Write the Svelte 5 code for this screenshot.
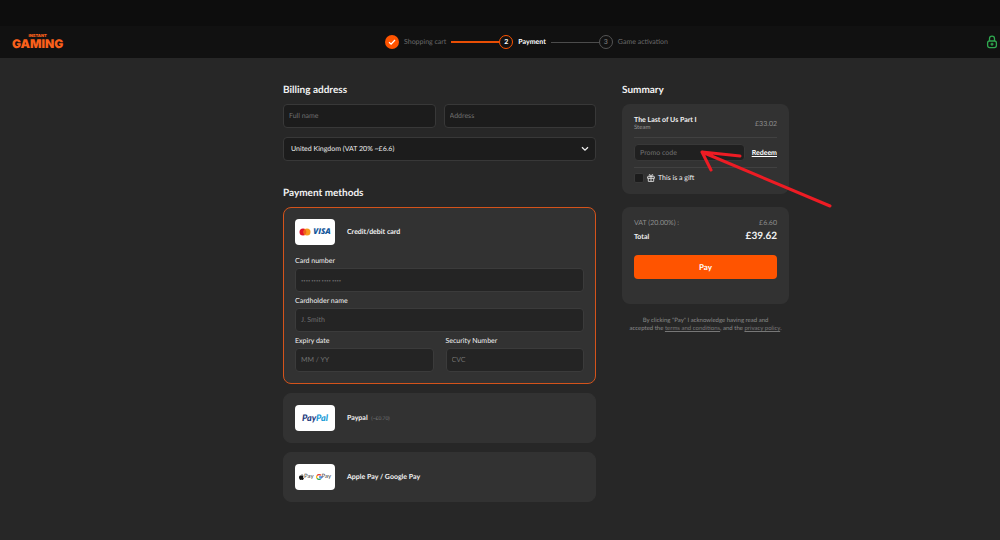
<script>
  let country = $state('gb');
  let gift = $state(false);
</script>

<div class="page">
  <header>
    <a class="logo" href="#home" aria-label="Instant Gaming">
      <small>INSTANT</small>
      <b>GAMING</b>
    </a>
    <ol class="steps">
      <li>
        <span class="dot done">
          <svg viewBox="0 0 14 14" width="14" height="14" aria-hidden="true"><path d="M4 7.3 6.1 9.2 10 5" fill="none" stroke="#fff" stroke-width="1.3" /></svg>
        </span>
        <span>Shopping cart</span>
      </li>
      <li class="line active" aria-hidden="true"></li>
      <li class="current"><span class="dot">2</span><span>Payment</span></li>
      <li class="line" aria-hidden="true"></li>
      <li><span class="dot">3</span><span>Game activation</span></li>
    </ol>
    <svg class="lock" viewBox="0 0 12 14" width="12" height="14" fill="none" stroke="#2fa84f" stroke-width="1.3" aria-hidden="true">
      <path d="M3.5 6V3.6a2.5 2.5 0 0 1 5 0V6" />
      <rect x="1.6" y="6" width="8.8" height="6.6" rx="2" />
      <path d="M6 7.7v3M4.5 9.2h3" />
    </svg>
  </header>

  <main>
    <div class="left">
      <section>
        <h2>Billing address</h2>
        <div class="two">
          <input type="text" placeholder="Full name" aria-label="Full name" />
          <input type="text" placeholder="Address" aria-label="Address" />
        </div>
        <div class="select">
          <select bind:value={country} aria-label="Country">
            <option value="gb">United Kingdom (VAT 20% ~£6.6)</option>
          </select>
          <svg viewBox="0 0 8 6" width="8" height="6" aria-hidden="true"><path d="M1 1.2 4 4.2 7 1.2" fill="none" stroke="#eee" stroke-width="1.3" /></svg>
        </div>
      </section>

      <section class="methods">
        <h2>Payment methods</h2>
        <div class="method selected">
          <div class="head">
            <span class="brand">
              <svg viewBox="0 0 12 8" width="12" height="8" aria-hidden="true"><circle cx="4" cy="4" r="3.5" fill="#e2152a" /><circle cx="8" cy="4" r="3.5" fill="#f79a1d" /><path d="M6 1.2a3.5 3.5 0 0 1 0 5.6 3.5 3.5 0 0 1 0-5.6" fill="#f0601c" /></svg>
              <b class="visa">VISA</b>
            </span>
            <strong>Credit/debit card</strong>
          </div>
          <label>Card number <input class="digits" type="text" placeholder="•••• •••• •••• ••••" /></label>
          <label>Cardholder name <input type="text" placeholder="J. Smith" /></label>
          <div class="pair">
            <label>Expiry date <input type="text" placeholder="MM / YY" /></label>
            <label>Security Number <input type="text" placeholder="CVC" /></label>
          </div>
        </div>
        <div class="method head">
          <span class="brand"><b class="paypal">Pay<i>Pal</i></b></span>
          <strong>Paypal <small>(~£0.70)</small></strong>
        </div>
        <div class="method head">
          <span class="brand wallets">
            <svg viewBox="0 0 10 12" width="5" height="6" aria-hidden="true"><path d="M7 0C7 1.6 6 2.7 4.8 2.8 4.7 1.5 5.8.3 7 0M9.3 4C7.6 5 7.8 7.5 9.8 8.3 9 10.5 8 12 6.9 12c-.7 0-1-.4-1.8-.4S3.900 12 3.300 12C1.500 12 0 9 0 6.600 0 3.200 3 2.400 5 3.600 6.500 2.800 8.300 2.900 9.300 4" fill="#111" /></svg>
            <span>Pay</span>
            <svg class="g" viewBox="0 0 12 12" width="6" height="6" fill="none" stroke-width="2.600" aria-hidden="true"><path d="M2 3.500A4.700 4.700 0 0 1 9.700 2.800" stroke="#ea4335" /><path d="M2 3.500a4.700 4.700 0 0 0 0 5" stroke="#fbbc05" /><path d="M2 8.500a4.700 4.700 0 0 0 7.300 1" stroke="#34a853" /><path d="M9.300 9.500A4.700 4.700 0 0 0 10.700 6H6" stroke="#4285f4" /></svg>
            <span>Pay</span>
          </span>
          <strong>Apple Pay / Google Pay</strong>
        </div>
      </section>
    </div>

    <aside>
      <h2>Summary</h2>
      <div class="card order">
        <div class="row item">
          <div><b>The Last of Us Part I</b><span>Steam</span></div>
          <span class="price">£33.02</span>
        </div>
        <div class="row promo">
          <input type="text" placeholder="Promo code" aria-label="Promo code" />
          <button class="redeem" type="button">Redeem</button>
        </div>
        <label class="gift">
          <input type="checkbox" bind:checked={gift} />
          <svg viewBox="0 0 8 8" width="8" height="8" fill="none" stroke="#ddd" stroke-width="0.9" aria-hidden="true"><path d="M.6 2.700h6.800v1.700H.6zM1.300 4.400v3h5.400v-3M4 2.700v4.700M4 2.500C1.500 2.500 1.700.4 2.700.5 3.500.6 4 2.500 4 2.500S4.500.6 5.300.5C6.300.4 6.500 2.500 4 2.500" /></svg>
          <span>This is a gift</span>
        </label>
      </div>
      <div class="card totals">
        <div class="row vat"><span>VAT (20.00%) :</span><span>£6.60</span></div>
        <div class="row total"><b>Total</b><strong>£39.62</strong></div>
        <button class="pay" type="button">Pay</button>
      </div>
      <p>By clicking "Pay" I acknowledge having read and<br />accepted the <a href="#terms">terms and conditions</a>, and the <a href="#privacy">privacy policy</a>.</p>
      <svg class="arrow" viewBox="0 0 140 64" width="140" height="64" aria-hidden="true"><path d="M134 59 6 5l38 4M6 5l9 18" fill="none" stroke="#ed1c24" stroke-width="3" stroke-linecap="round" stroke-linejoin="round" /></svg>
    </aside>
  </main>
</div>

<style>
  :global(body) {
    margin: 0;
    background: #272727;
  }
  .page {
    min-height: 100vh;
    box-sizing: border-box;
    border-bottom: 2px solid #1f1c1f;
    background: #272727;
    color: #f2f2f2;
    font: 7px/8px Lato, sans-serif;
    text-rendering: geometricPrecision;
  }
  .page :global(*) {
    box-sizing: border-box;
  }
  header {
    display: grid;
    grid-template-columns: 385px 1fr auto;
    align-items: center;
    height: 58px;
    padding: 0 2px 0 0;
    border-top: 26px solid #0d0d0d;
    background: #111;
  }
  .logo {
    display: flex;
    flex-direction: column;
    align-items: center;
    justify-self: start;
    margin-left: 12px;
    color: #f9601b;
    font-family: Inter, sans-serif;
    text-decoration: none;
  }
  .logo small {
    font-size: 4px;
    line-height: 4px;
    font-weight: 900;
  }
  .logo b {
    font-size: 12px;
    line-height: 12px;
    font-weight: 900;
  }
  .steps {
    display: flex;
    align-items: center;
    gap: 5px;
    margin: 0;
    padding: 0;
    list-style: none;
    color: #6a6a6a;
  }
  .steps li {
    display: flex;
    align-items: center;
    gap: 5px;
  }
  .dot {
    display: flex;
    align-items: center;
    justify-content: center;
    width: 14px;
    height: 14px;
    border: 1px solid #555;
    border-radius: 50%;
    font-weight: 700;
  }
  .done {
    border: 0;
    background: #ff5400;
  }
  .current {
    color: #fff;
    font-weight: 700;
  }
  .current .dot {
    border-color: #ff5400;
  }
  .steps .line {
    width: 48px;
    height: 1px;
    margin-right: -5px;
    background: #4c4c4c;
  }
  .steps .active {
    height: 2px;
    background: #e84e04;
  }
  main {
    display: grid;
    grid-template-columns: minmax(0, 313fr) minmax(0, 167fr);
    gap: 26px;
    align-items: start;
    max-width: 506px;
    margin-left: 28.3%;
    padding: 26px 0 36px;
  }
  h2 {
    margin: 0 0 7px;
    font-size: 10px;
    line-height: 13px;
    font-weight: 700;
  }
  input,
  select {
    display: block;
    width: 100%;
    height: 24px;
    margin: 0;
    padding: 0 5px;
    border: 1px solid #383838;
    border-radius: 4px;
    background: #1c1c1c;
    color: #eee;
    font: inherit;
    text-rendering: inherit;
  }
  input::placeholder {
    color: #707070;
    opacity: 1;
  }
  .digits::placeholder {
    font-size: 4px;
  }
  .two {
    display: grid;
    grid-template-columns: 1fr 1fr;
    gap: 8px;
  }
  .select {
    display: grid;
    align-items: center;
    margin-top: 9px;
  }
  .select select,
  .select svg {
    grid-area: 1 / 1;
  }
  .select select {
    appearance: none;
    padding: 0 7px;
  }
  .select svg {
    justify-self: end;
    margin-right: 7px;
    pointer-events: none;
  }
  .methods {
    margin-top: 26px;
  }
  .method {
    margin-bottom: 9px;
    padding: 11px;
    border: 1px solid #323232;
    border-radius: 8px;
    background: #323232;
  }
  .selected {
    border-color: #d4531b;
  }
  .head {
    display: flex;
    align-items: center;
    gap: 12px;
  }
  .brand {
    display: flex;
    align-items: center;
    justify-content: center;
    gap: 2px;
    width: 40px;
    height: 26px;
    border-radius: 4px;
    background: #fff;
  }
  .brand + strong {
    font-size: 7px;
    font-weight: 700;
  }
  .brand + strong small {
    margin-left: 2px;
    color: #777;
    font-size: 5px;
    font-weight: 400;
  }
  .visa {
    color: #15589b;
    font: italic 900 8px/10px "Open Sans", sans-serif;
  }
  .paypal {
    color: #253b80;
    font: italic 900 9px/10px Lato, sans-serif;
  }
  .paypal i {
    color: #179bd7;
  }
  .wallets {
    gap: 0;
    color: #444;
    font-size: 6px;
  }
  .wallets .g {
    margin-left: 2px;
  }
  label {
    display: block;
  }
  .selected label {
    margin-top: 5px;
  }
  .selected .head + label {
    margin-top: 12px;
  }
  .selected input {
    margin-top: 3px;
    border-color: #3b3b3b;
    background: #242424;
  }
  .pair {
    display: grid;
    grid-template-columns: 1fr 1fr;
    gap: 12px;
  }
  aside {
    position: relative;
  }
  .card {
    padding: 12px;
    border-radius: 8px;
    background: #323232;
  }
  .order {
    padding-bottom: 6px;
  }
  .row {
    display: flex;
    align-items: center;
    justify-content: space-between;
  }
  .item {
    padding-bottom: 5px;
    border-bottom: 1px solid #414141;
  }
  .item b,
  .item div span {
    display: block;
  }
  .item div span {
    color: #929292;
    font-size: 6px;
  }
  .price,
  .vat {
    color: #8d8d8d;
  }
  .promo {
    gap: 7px;
    padding: 6px 0;
    border-bottom: 1px solid #414141;
  }
  .promo input {
    height: 17px;
    min-width: 0;
    background: #202020;
  }
  button {
    padding: 0;
    border: 0;
    background: none;
    color: #fff;
    font: inherit;
    font-weight: 700;
    text-rendering: inherit;
    cursor: pointer;
  }
  .redeem {
    text-decoration: underline;
  }
  .gift {
    display: flex;
    align-items: center;
    gap: 3px;
    padding: 5px 0;
  }
  .gift input {
    appearance: none;
    width: 10px;
    height: 10px;
    padding: 0;
    border-radius: 2px;
  }
  .gift input:checked {
    background: #ff5400;
  }
  .totals {
    margin-top: 13px;
    padding-bottom: 25px;
  }
  .total {
    margin: 3px 0 12px;
  }
  .total strong {
    font-size: 10px;
    line-height: 13px;
  }
  .pay {
    width: 100%;
    height: 24px;
    border-radius: 4px;
    background: #ff5400;
    font-size: 8px;
  }
  p {
    margin: 13px 0 0;
    color: #8a8a8a;
    font-size: 6px;
    line-height: 8px;
    text-align: center;
  }
  p a {
    color: #777;
  }
  .arrow {
    position: absolute;
    top: 63px;
    left: 74px;
    pointer-events: none;
  }
</style>
